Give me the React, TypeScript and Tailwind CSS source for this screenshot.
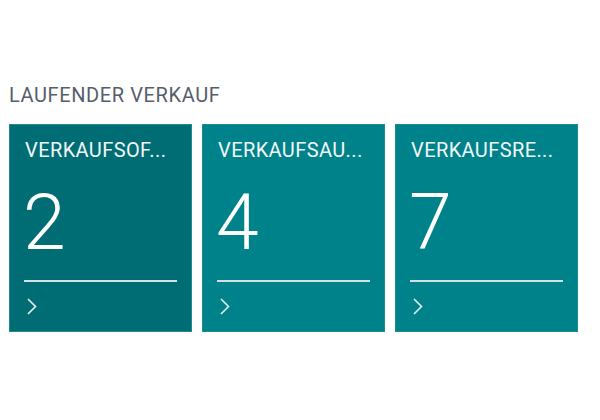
import React from "react";

const tiles = [
  { title: "VERKAUFSOF...", value: "2", bg: "bg-[#006d74]" },
  { title: "VERKAUFSAU...", value: "4", bg: "bg-[#00828a]" },
  { title: "VERKAUFSRE...", value: "7", bg: "bg-[#00828a]" },
];

export default function App() {
  return (
    <div className="w-[600px] h-[420px] bg-white pl-[9px] pt-[83px]" style={{ fontFamily: "Roboto, 'Open Sans', sans-serif" }}>
      <div className="text-[20px] leading-[24px] text-[#565e6b] tracking-[0.6px]">LAUFENDER VERKAUF</div>
      <div className="flex gap-[10px] mt-[17px]">
        {tiles.map((t) => (
          <div key={t.value} className={`${t.bg} w-[183px] h-[208px] flex flex-col px-[14px] pt-[13px] border border-[#1a8c92]`}>
            <div className="text-[20px] leading-[24px] text-[#f2f8f8] tracking-[0.4px] ml-[1px]">{t.title}</div>
            <div className="text-[77px] leading-[77px] font-light text-white mt-[23px] -ml-[1px]">{t.value}</div>
            <div className="h-[2px] bg-[#cfe3e4] mt-[18px]"></div>
            <svg className="mt-[15px] ml-[2px]" width="12" height="19" viewBox="0 0 12 19" fill="none">
              <path d="M2 2 L9.5 9.5 L2 17" stroke="#e6f2f2" strokeWidth="1.6" />
            </svg>
          </div>
        ))}
      </div>
    </div>
  );
}
